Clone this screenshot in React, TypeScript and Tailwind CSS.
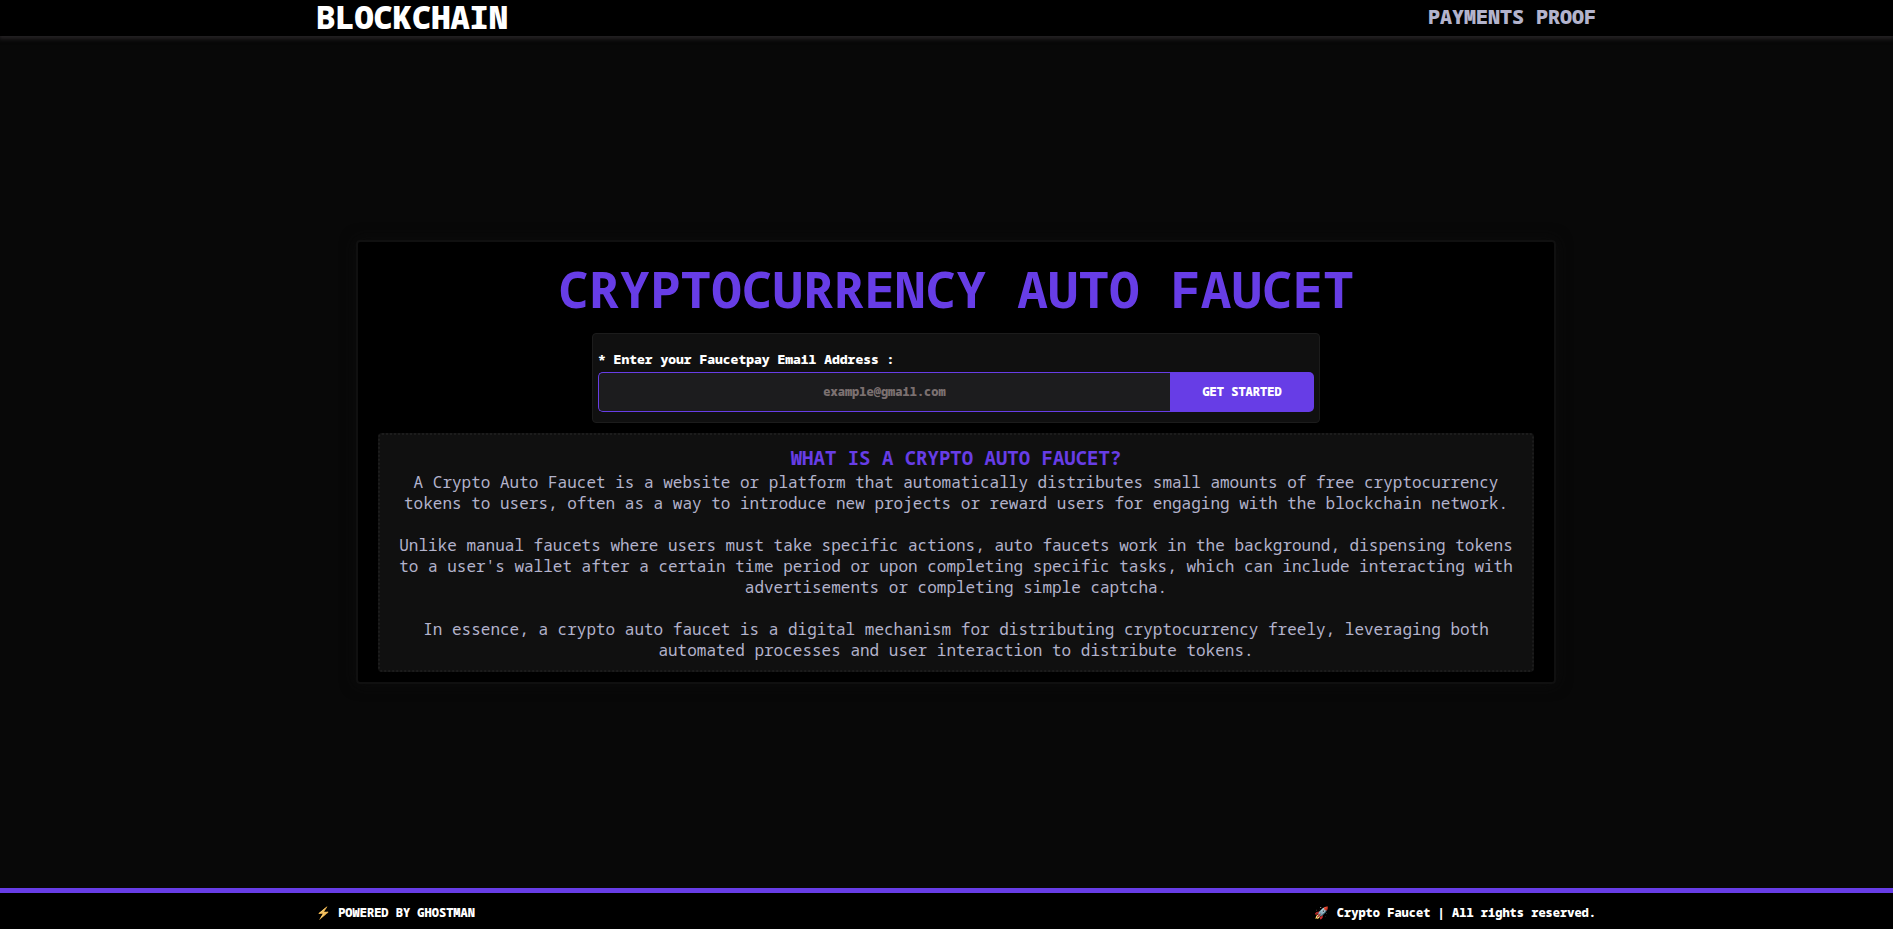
import React from "react";

const paragraphs = [
  "A Crypto Auto Faucet is a website or platform that automatically distributes small amounts of free cryptocurrency tokens to users, often as a way to introduce new projects or reward users for engaging with the blockchain network.",
  "Unlike manual faucets where users must take specific actions, auto faucets work in the background, dispensing tokens to a user's wallet after a certain time period or upon completing specific tasks, which can include interacting with advertisements or completing simple captcha.",
  "In essence, a crypto auto faucet is a digital mechanism for distributing cryptocurrency freely, leveraging both automated processes and user interaction to distribute tokens.",
];

export default function App() {
  return (
    <div className="flex min-h-screen flex-col bg-[#080808] font-['Noto_Sans_Mono','Liberation_Mono',monospace] text-[#b3b3cc]">
      <header className="bg-black pl-[19px] shadow-[0_2px_4px_1px_#252224]">
        <div className="mx-auto flex h-9 max-w-[1280px] items-center justify-between pb-0.5">
          <a href="#" className="text-[32px] leading-[34px] font-black text-white">BLOCKCHAIN</a>
          <nav>
            <a href="#payments" className="text-xl leading-[34px] font-black">PAYMENTS PROOF</a>
          </nav>
        </div>
      </header>

      <main className="flex flex-1 items-center justify-center pl-[19px]">
        <section className="flex w-full max-w-[1200px] flex-col items-center gap-2.5 rounded border-2 border-[#101010] bg-black px-5 pb-2.5 shadow-[0_0_15px_#0c0c0c]">
          <h1 className="pt-3 text-center text-[51px] leading-[69px] font-bold text-[#673de6]">
            CRYPTOCURRENCY AUTO FAUCET
          </h1>
          <form
            className="w-full max-w-[728px] rounded border border-[#1c1c1c] bg-[#101010] px-[5px] pt-4 pb-2.5"
            onSubmit={(event) => event.preventDefault()}
          >
            <label htmlFor="email" className="block h-[22px] text-[13px] leading-[18px] font-black text-white">
              * Enter your Faucetpay Email Address :
            </label>
            <div className="flex h-10">
              <input
                id="email"
                type="email"
                placeholder="example@gmail.com"
                className="min-w-0 flex-1 rounded-l-[5px] border border-r-0 border-[#673de6] bg-[#1c1c1e] text-center text-xs font-black text-white outline-none placeholder:text-[#7b7070]"
              />
              <button type="submit" className="w-36 rounded-r-[5px] bg-[#673de6] text-xs font-black text-white">
                GET STARTED
              </button>
            </div>
          </form>
          <article className="w-full rounded border-2 border-dotted border-[#1c1c1c] bg-[#101010] px-4 pt-2.5 pb-[9px] text-center">
            <h2 className="text-[19px] leading-[27px] font-bold text-[#673de6]">WHAT IS A CRYPTO AUTO FAUCET?</h2>
            <div className="flex flex-col gap-[21px] text-base leading-[21px]">
              {paragraphs.map((text) => (
                <p key={text}>{text}</p>
              ))}
            </div>
          </article>
        </section>
      </main>

      <footer className="border-t-5 border-[#673de6] bg-black pl-[19px]">
        <div className="mx-auto flex h-9 max-w-[1280px] items-center justify-between pt-1 text-xs leading-4 font-black text-white">
          <p>
            <span className="inline-block font-['Noto_Color_Emoji',sans-serif] hue-rotate-[-15deg] saturate-75">⚡️</span> POWERED BY GHOSTMAN
          </p>
          <p>
            <span className="font-['Noto_Color_Emoji',sans-serif]">🚀</span> Crypto Faucet | All rights reserved.
          </p>
        </div>
      </footer>
    </div>
  );
}
